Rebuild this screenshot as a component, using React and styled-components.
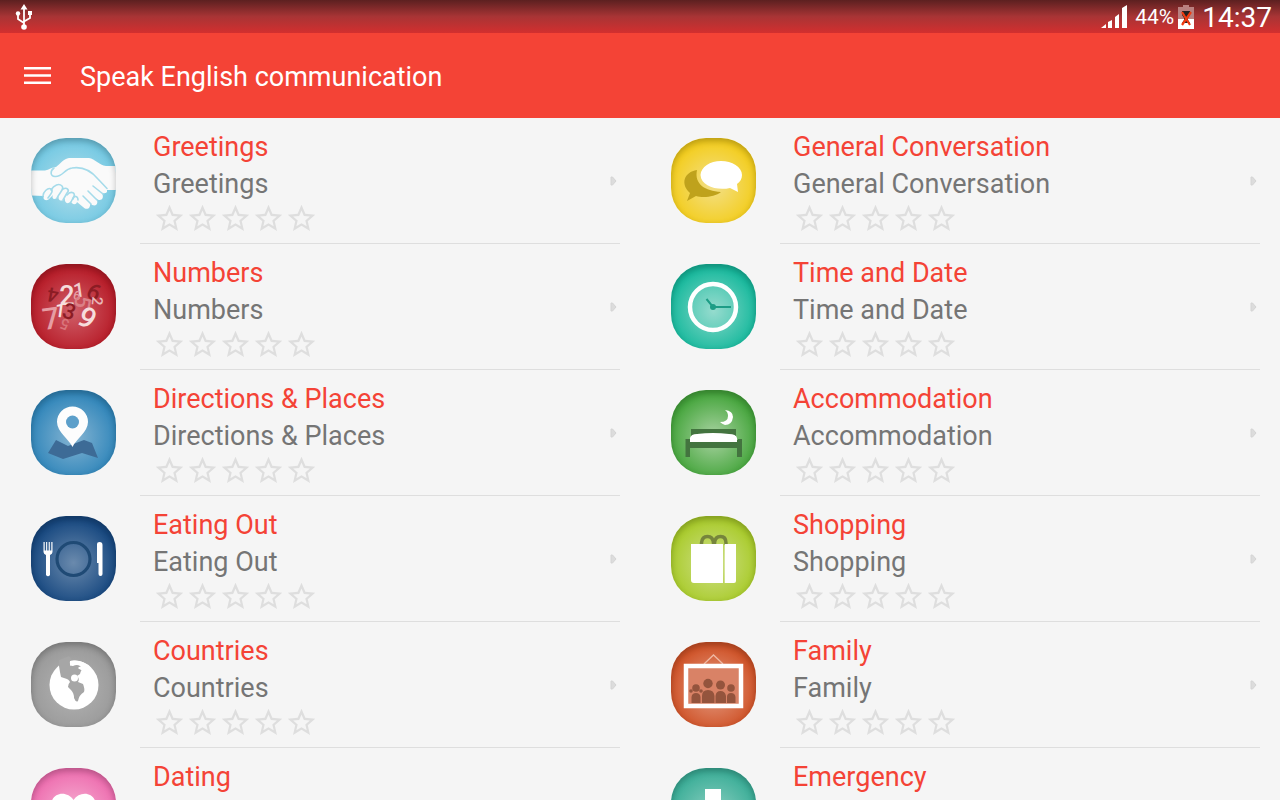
import React from 'react';
import styled, { createGlobalStyle } from 'styled-components';

const Handshake = () => (
	<>
		<path d="M0 32.5H14C18 32 21 29 25 29C29 26 33 20.5 38 20H58C64 21 68 27 75 28H85V52H76C77 56 72 56 70 54C75 60 69 65 65 60C69 67 63 70 59 65C60 70 56 73 52 69L46 64C45 68 40 66 40 63C37 67 33 65 34 60C31 65 26 62 28 58C24 63 20 61 22 57L19 60C16 64 11 62 13 58L0 57.500Z" fill="#fafafa" />
		<g fill="none" stroke="#a5dbea" strokeWidth="1.600" strokeLinecap="round" strokeLinejoin="round">
			<path d="M23 30C19 33 19 38 24 38.500C32 39 33 31 41 30C53 28 62 35 67 41L76 50.500" />
			<path d="M12 58C12 54 17 49 20 51C23 53 19 57 17 60" />
			<path d="M20 52C23 47 28 45 31 48C34 51 28 55 26 60" />
			<path d="M32 51C36 49 39 52 36 55L32 62" />
			<path d="M36 57C40 52 46 55 42 60L40 64" />
			<path d="M42 61C43 57 47 58 47 62" />
			<path d="M52 58L60 66M57 53L66 62M62 48L72 56" />
		</g>
	</>
);

const Digits = () => (
	<g fontFamily="Roboto, sans-serif" fontWeight="500" textAnchor="middle">
		<text x="36" y="41" fontSize="27" fill="#f6dcdc">2</text>
		<text x="48" y="33" fontSize="20" fill="#f0cccc" transform="rotate(-8 48 26)">1</text>
		<text x="22" y="38" fontSize="20" fill="#8c1c24" transform="rotate(190 22 31)">4</text>
		<text x="63" y="36" fontSize="23" fill="#8c1c24" transform="rotate(28 63 28)">6</text>
		<text x="46" y="36" fontSize="13" fill="#e59da2" transform="rotate(10 46 31)">6</text>
		<text x="52" y="46" fontSize="22" fill="#db8087" transform="rotate(100 52 38)">5</text>
		<text x="66" y="42" fontSize="15" fill="#eab8bb" transform="rotate(95 66 37)">2</text>
		<text x="20" y="65" fontSize="30" fill="#e69da3" transform="rotate(-8 20 55)">7</text>
		<text x="29" y="53" fontSize="19" fill="#f8e4e4" transform="rotate(8 29 46)">1</text>
		<text x="38" y="55" fontSize="22" fill="#8c1c24" transform="rotate(18 38 48)">3</text>
		<text x="56" y="64" fontSize="29" fill="#f6dcdc" transform="rotate(32 56 54)">9</text>
		<text x="34" y="65" fontSize="15" fill="#d9747b" transform="rotate(200 34 60)">5</text>
	</g>
);

const MapPin = () => (
	<>
		<path d="M25 50L37 56L53 50L61 53L67 68L51 63L32 69L17 63Z" fill="#3d6b96" />
		<path d="M41.500 57C38 49 26 42 26 32A15.500 15.500 0 0 1 57 32C57 42 45 49 41.500 57Z" fill="#fdfdfd" />
		<circle cx="41.500" cy="32" r="6.500" fill="#5c9fca" />
	</>
);

const Plate = () => (
	<>
		<circle cx="42.500" cy="43" r="16.500" fill="none" stroke="#1f4a75" strokeWidth="3.200" />
		<path d="M12.500 26V36Q12.500 38 15 39V59Q17 61.500 19 59V39Q21.500 38 21.500 36V26H20.300V34.500H18.800V26H17.700V34.500H16.200V26H15.100V34.500H13.700V26Z" fill="#fff" />
		<path d="M66 28Q66 26 68.500 26Q71.500 26 71.500 29V58Q71.500 60 69.500 60Q67.500 60 67.500 58V47H66Z" fill="#fff" />
	</>
);

const Globe = () => (
	<>
		<circle cx="43" cy="43" r="24.500" fill="#fff" />
		<path d="M28 24Q29 31 30 35L33 36Q38 37 39 40Q37 42 37 45L40 48Q43 51 43 56Q45 61 47 59Q48 53 53 50Q54 47 52 42L47 40Q49 37 46 34L49 32Q50 28 51 28Q52 26 49 24Q46 22 42 24Q38 24 39 19Q42 18 38 14L28 18Z" fill="#a6a6a6" />
		<path d="M39.500 19C48 17 55 21 60 26L51 31C53 28 49 28 47 26C49 24 53 24 52 22C48 24 43 20 39 24Z" fill="#fff" />
		<circle cx="43.500" cy="36" r="3.500" fill="#fff" />
	</>
);

const Bubbles = () => (
	<>
		<path d="M26 32C23 46 34 53 50 54C44 59 32 60 25 58L16 63L19 55C9 46 13 34 26 32Z" fill="#bfa21c" />
		<path d="M50 23C61 23 71 29 71 37C71 41 69 44 66 46L67 54L59 50C46 53 30 48 29.500 37C30 29 39 23 50 23Z" fill="#fff" />
	</>
);

const Clock = () => (
	<>
		<circle cx="42" cy="43" r="23" fill="#fff" fillOpacity=".1" stroke="#fff" strokeWidth="4.500" />
		<path d="M35.500 35L42 43H60" fill="none" stroke="#1d9d86" strokeWidth="2" />
		<circle cx="42" cy="43" r="3" fill="#1d9d86" />
	</>
);

const Bed = () => (
	<>
		<path d="M20 39H65V50H67V49H71V67H66V58H19V67H14.500V49H20Z" fill="#43743f" />
		<path d="M19 52V48Q20 44 26 44Q42 42 58 44Q65 44 66 48V52Z" fill="#fff" />
		<path d="M54 20Q62 21 62 27Q61 35 54 35Q51 34 49 32Q57 32 57 26Q57 22 54 20Z" fill="#fff" />
	</>
);

const Bags = () => (
	<>
		<path d="M30.500 29V27Q31 20.500 36.500 20.500T42.500 27V29M43.500 29V27Q44 20.500 49.500 20.500T55 27V29" fill="none" stroke="#76853c" strokeWidth="3.500" />
		<path d="M20 28H52V67H23Q20 67 20 64ZM53.700 28H65V65Q65 67 63 67H53.700Z" fill="#fff" />
	</>
);

const FamilyPortrait = () => (
	<>
		<path d="M33 22L42.500 13L52 22" fill="none" stroke="#efb9a3" strokeWidth="1.300" />
		<rect x="15" y="24" width="55" height="40" fill="#d98266" stroke="#fff" strokeWidth="4.500" />
		<g fill="#94543d">
			<circle cx="25" cy="46" r="3.800" />
			<circle cx="20" cy="49" r="1.800" />
			<circle cx="30" cy="49" r="1.800" />
			<circle cx="37" cy="41.500" r="4.700" />
			<circle cx="49.500" cy="43" r="4.500" />
			<circle cx="60" cy="46" r="3.800" />
			<path d="M20.500 61V55Q21 51 25 51T29.500 55V61ZM31 61V54Q31 48 37 48T43.500 54V61ZM44.500 61V54Q45 49 49.500 49T55 54V61ZM56 61V55Q56 51 60 51T64.500 55V61Z" />
		</g>
	</>
);

const Heart = () => (
	<path d="M42.500 67C32 58 20 50 20 38C20 24 36 22 42.500 32C49 22 65 24 65 38C65 50 53 58 42.500 67Z" fill="#fff" />
);

const Cross = () => (
	<path d="M34 21H50V35H64V51H50V65H34V51H20V35H34Z" fill="#fff" />
);

const topics = [
	{ name: 'Greetings', art: Handshake, light: '#b5deea', base: '#74c9e3' },
	{ name: 'General Conversation', art: Bubbles, light: '#f3e08a', base: '#f3cd1d' },
	{ name: 'Numbers', art: Digits, light: '#d0606a', base: '#b71c28' },
	{ name: 'Time and Date', art: Clock, light: '#8ad8c9', base: '#17b99d' },
	{ name: 'Directions & Places', art: MapPin, light: '#86b5d3', base: '#3186ba' },
	{ name: 'Accommodation', art: Bed, light: '#a9d3a2', base: '#45a53c' },
	{ name: 'Eating Out', art: Plate, light: '#6a8aad', base: '#174880' },
	{ name: 'Shopping', art: Bags, light: '#cfe08c', base: '#a9cb2b' },
	{ name: 'Countries', art: Globe, light: '#b4b4b4', base: '#9a9a9a' },
	{ name: 'Family', art: FamilyPortrait, light: '#e5a088', base: '#cf5227' },
	{ name: 'Dating', art: Heart, light: '#f6b5d5', base: '#ee6fb0' },
	{ name: 'Emergency', art: Cross, light: '#8fd0c2', base: '#3cae98' },
];

const Stars = () => (
	<Rating role="img" aria-label="0 out of 5 stars">
		{ [1, 2, 3, 4, 5].map(n => (
			<Star key={ n } viewBox="0 0 24 24">
				<path d="M22 9.240l-7.190-.62L12 2 9.190 8.630 2 9.240l5.460 4.730L5.820 21 12 17.270 18.180 21l-1.630-7.030L22 9.240zM12 15.400l-3.760 2.270 1-4.280-3.320-2.880 4.380-.38L12 6.100l1.710 4.040 4.380.38-3.320 2.880 1 4.280L12 15.400z" />
			</Star>
		)) }
	</Rating>
);

const Topic = ({ name, art: Art, light, base }) => (
	<Row href="#">
		<Tile $light={ light } $base={ base }>
			<svg viewBox="0 0 85 85" aria-hidden="true"><Art /></svg>
		</Tile>
		<Details>
			<div>
				<Name>{ name }</Name>
				<Translation>{ name }</Translation>
				<Stars />
			</div>
			<Arrow viewBox="0 0 7 10" aria-hidden="true">
				<path d="M1 1H2.500L6 5L2.500 9H1Z" fill="#dcdcdc" stroke="#d4d4d4" />
			</Arrow>
		</Details>
	</Row>
);

const App = () => (
	<Screen>
		<GlobalStyle />
		<StatusBar>
			<UsbIcon viewBox="0 0 18 26" aria-label="USB connected">
				<path d="M9 3V23M9 19L3 15V10M9 17.500L15 14V9" fill="none" stroke="#fff" strokeWidth="1.800" />
				<path d="M9 0L12.500 5.500H5.500ZM13 7H17V11H13Z" fill="#fff" />
				<circle cx="3" cy="9.500" r="2.200" fill="#fff" />
				<circle cx="9" cy="23" r="2.800" fill="#fff" />
			</UsbIcon>
			<StatusGroup>
				<SignalIcon viewBox="0 0 26 23" aria-label="Signal">
					<path d="M0 23L5 19V23ZM7 17L11 15V23H7ZM14 12L18 9V23H14ZM21 3L26 0V23H21Z" fill="#fff" />
				</SignalIcon>
				<Percent>44%</Percent>
				<BatteryIcon viewBox="0 0 16 24" aria-label="Battery">
					<path d="M5 0H11V2H16V14H0V2H5Z" fill="#b98080" />
					<path d="M0 14H16V24H0Z" fill="#fff" />
					<path d="M4 6H12V10L10 13V15L12 18H4L6 15V13L4 10Z" fill="#222" />
					<path d="M4 7L12 20M13 7L4 20" stroke="#f03a10" strokeWidth="2.200" />
				</BatteryIcon>
				<Time>14:37</Time>
			</StatusGroup>
		</StatusBar>
		<AppBar>
			<MenuButton type="button" aria-label="Open menu">
				<svg width="27" height="19" viewBox="0 0 27 19" fill="#fff">
					<path d="M0 1H27V3.500H0ZM0 8.200H27V10.800H0ZM0 15.500H27V18H0Z" />
				</svg>
			</MenuButton>
			<Title>Speak English communication</Title>
		</AppBar>
		<TopicGrid>
			{ topics.map(topic => <Topic key={ topic.name } { ...topic } />) }
		</TopicGrid>
	</Screen>
);

export default App;

const GlobalStyle = createGlobalStyle`
	* {
		box-sizing: border-box;
	}

	body {
		margin: 0;
		background-color: #f5f5f5;
		font-family: Roboto, sans-serif;
	}
`;

const Screen = styled.div`
	display: flex;
	flex-direction: column;
	height: 100vh;
`;
const StatusBar = styled.div`
	display: flex;
	flex: none;
	align-items: center;
	justify-content: space-between;
	height: 33px;
	padding: 0 8px 0 15px;
	background: linear-gradient(#5c2020, #a83435 50%, #d32f2f);
	color: #fff;
`;
const StatusGroup = styled.div`
	display: flex;
	align-items: center;
`;
const UsbIcon = styled.svg`
	width: 18px;
	height: 26px;
`;
const SignalIcon = styled.svg`
	width: 26px;
	height: 23px;
	margin-right: 8px;
`;
const Percent = styled.span`
	padding-top: 2px;
	font-size: 21px;
	line-height: 33px;
`;
const BatteryIcon = styled.svg`
	width: 16px;
	height: 24px;
	margin: 0 8px 0 4px;
`;
const Time = styled.span`
	padding-top: 1px;
	font-size: 28px;
	line-height: 33px;
`;
const AppBar = styled.header`
	display: flex;
	flex: none;
	align-items: center;
	height: 85px;
	padding: 0 24px;
	background-color: #f44336;
	color: #fff;
`;
const MenuButton = styled.button`
	display: flex;
	margin: 0 29px 0 0;
	padding: 0;
	border: none;
	background: none;
	cursor: pointer;
`;
const Title = styled.h1`
	margin: 0;
	padding-top: 2px;
	font-size: 27px;
	font-weight: 400;
`;
const TopicGrid = styled.main`
	display: grid;
	flex: 1;
	grid-template-columns: 1fr 1fr;
	align-content: start;
	min-height: 0;
	overflow-y: auto;
	scrollbar-width: none;
`;
const Row = styled.a`
	display: flex;
	padding-right: 20px;
	color: inherit;
	text-decoration: none;
`;
const Tile = styled.div`
	display: grid;
	flex: none;
	width: 85px;
	height: 85px;
	margin: 20px 24px 0 31px;
	border-radius: 35px;
	overflow: hidden;
	background: radial-gradient(circle at 50% 55%, ${ p => p.$light }, ${ p => p.$base } 70%);

	> *, &::after {
		grid-area: 1 / 1;
	}

	&::after {
		content: '';
		border-radius: 35px;
		box-shadow: inset 0 3px 6px rgba(0, 0, 0, .25);
	}
`;
const Details = styled.div`
	display: flex;
	flex: 1;
	align-items: center;
	justify-content: space-between;
	padding: 11px 3px 8px 13px;
	border-bottom: 1px solid #dedede;
`;
const Name = styled.h2`
	margin: 0;
	color: #f44336;
	font-size: 27px;
	font-weight: 400;
	line-height: 37px;
`;
const Translation = styled.p`
	margin: 0;
	color: #757575;
	font-size: 27px;
	line-height: 37px;
`;
const Rating = styled.div`
	display: flex;
	margin-top: -1px;
`;
const Star = styled.svg`
	width: 33px;
	height: 33px;
	fill: #dedede;
`;
const Arrow = styled.svg`
	width: 7px;
	height: 10px;
	margin-bottom: 3px;
`;
